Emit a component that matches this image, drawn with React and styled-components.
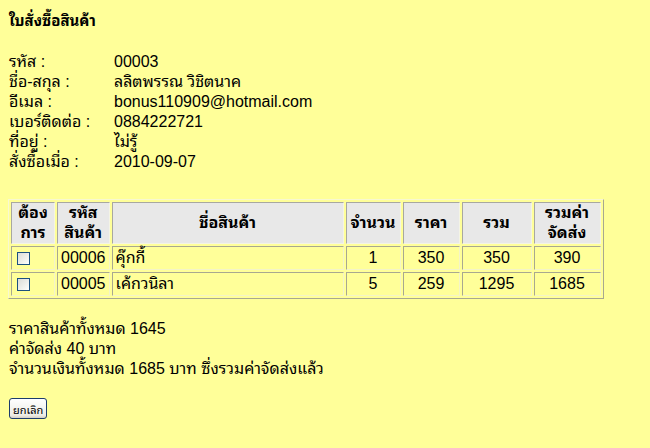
import React from "react";
import styled, { createGlobalStyle } from "styled-components";

const Global = createGlobalStyle`
  html, body { background: #ffff99; }
  body {
    margin: 8px;
    font-family: "Liberation Sans", "Noto Sans Thai Looped", "Noto Sans Thai", sans-serif;
    font-size: 16px;
    color: #000;
  }
`;

const Page = styled.div`
  display: flex;
  flex-direction: column;
  align-items: flex-start;
`;

const Title = styled.h1`
  margin: 3px 0 0 1px;
  font-size: 15px;
  font-weight: bold;
  line-height: 20px;
`;

const Info = styled.div`
  display: grid;
  grid-template-columns: 105px auto;
  margin: 21px 0 0 1px;
  line-height: 20px;
`;

const Label = styled.div``;
const Value = styled.div``;

const Table = styled.table`
  margin-top: 27px;
  border-collapse: separate;
  border-spacing: 2px;
  table-layout: fixed;
  border: 1px solid;
  border-color: #f8f8d0 #a8a890 #a8a890 #f8f8d0;
`;

const Th = styled.th`
  background: #e8e8e8;
  border: 1px solid;
  border-color: #a8a8a0 #f4f4e4 #f4f4e4 #a8a8a0;
  padding: 0 3px;
  font-weight: bold;
  line-height: 20px;
  text-align: center;
  width: ${(p) => p.$w}px;
`;

const Td = styled.td`
  border: 1px solid;
  border-color: #a8a890 #f4f4c8 #f4f4c8 #a8a890;
  padding: 1px 3px;
  line-height: 20px;
  text-align: ${(p) => p.$align || "left"};
`;

const Check = styled.input`
  appearance: none;
  -webkit-appearance: none;
  display: block;
  margin: 0 0 0 2px;
  width: 13px;
  height: 13px;
  border: 1px solid #1c5180;
  background: linear-gradient(135deg, #dcdcd7 0%, #f4f4f0 70%, #ffffff 100%);
  box-sizing: border-box;
`;

const Totals = styled.div`
  margin: 20px 0 0 1px;
  line-height: 20px;
`;

const Button = styled.button`
  margin: 19px 0 0 1px;
  font-family: inherit;
  font-size: 11px;
  padding: 1px 3px;
  height: 21px;
  color: #000;
  background: linear-gradient(#ffffff, #ececE6 85%, #d6d0c5);
  border: 1px solid #1c3c6c;
  border-radius: 3px;
`;

const info = [
  ["รหัส :", "00003"],
  ["ชื่อ-สกุล :", "ลลิตพรรณ วิชิตนาค"],
  ["อีเมล :", "bonus110909@hotmail.com"],
  ["เบอร์ติดต่อ :", "0884222721"],
  ["ที่อยู่ :", "ไม่รู้"],
  ["สั่งซื้อเมื่อ :", "2010-09-07"],
];

const items = [
  ["00006", "คุ๊กกี้", 1, 350, 350, 390],
  ["00005", "เค้กวนิลา", 5, 259, 1295, 1685],
];

export default function App() {
  return (
    <Page>
      <Global />
      <Title>ใบสั่งซื้อสินค้า</Title>
      <Info>
        {info.map(([l, v]) => (
          <React.Fragment key={l}>
            <Label>{l}</Label>
            <Value>{v}</Value>
          </React.Fragment>
        ))}
      </Info>
      <Table>
        <thead>
          <tr>
            <Th $w={36}>ต้อง<br />การ</Th>
            <Th $w={41}>รหัส<br />สินค้า</Th>
            <Th $w={224}>ชื่อสินค้า</Th>
            <Th $w={47}>จำนวน</Th>
            <Th $w={49}>ราคา</Th>
            <Th $w={62}>รวม</Th>
            <Th $w={59}>รวมค่า<br />จัดส่ง</Th>
          </tr>
        </thead>
        <tbody>
          {items.map((it) => (
            <tr key={it[0]}>
              <Td><Check type="checkbox" /></Td>
              <Td>{it[0]}</Td>
              <Td>{it[1]}</Td>
              <Td $align="center">{it[2]}</Td>
              <Td $align="center">{it[3]}</Td>
              <Td $align="center">{it[4]}</Td>
              <Td $align="center">{it[5]}</Td>
            </tr>
          ))}
        </tbody>
      </Table>
      <Totals>
        ราคาสินค้าทั้งหมด 1645<br />
        ค่าจัดส่ง 40 บาท<br />
        จำนวนเงินทั้งหมด 1685 บาท ซึ่งรวมค่าจัดส่งแล้ว
      </Totals>
      <Button>ยกเลิก</Button>
    </Page>
  );
}
